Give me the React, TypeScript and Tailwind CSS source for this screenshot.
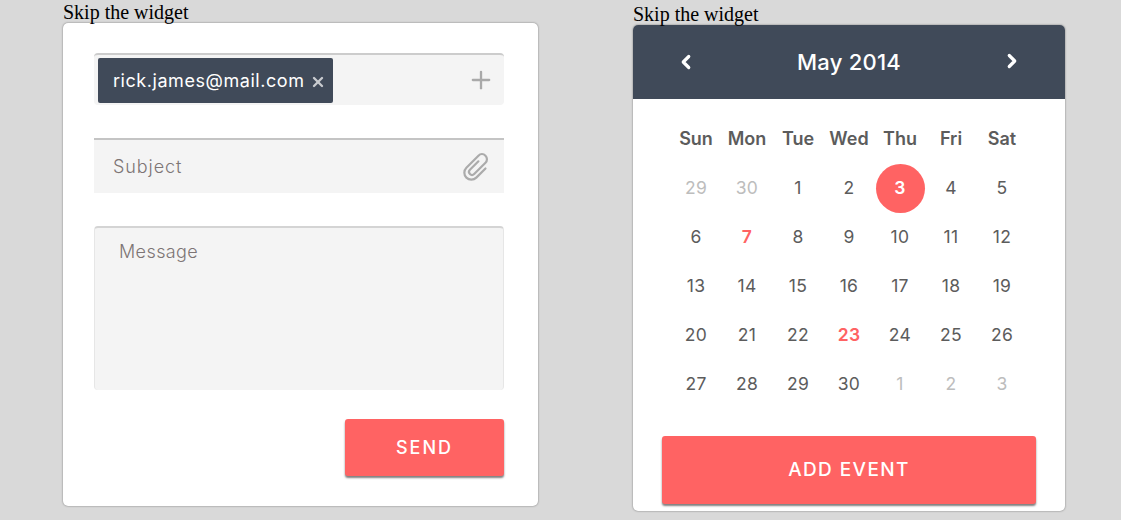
import React from 'react';
import { ChevronLeft, ChevronRight, Plus, X } from 'lucide-react';

type Day = { label: number; kind?: 'muted' | 'red' | 'today' };

const weekDays = ['Sun', 'Mon', 'Tue', 'Wed', 'Thu', 'Fri', 'Sat'];

const days: Day[] = [
    { label: 29, kind: 'muted' }, { label: 30, kind: 'muted' }, { label: 1 }, { label: 2 }, { label: 3, kind: 'today' }, { label: 4 }, { label: 5 },
    { label: 6 }, { label: 7, kind: 'red' }, { label: 8 }, { label: 9 }, { label: 10 }, { label: 11 }, { label: 12 },
    { label: 13 }, { label: 14 }, { label: 15 }, { label: 16 }, { label: 17 }, { label: 18 }, { label: 19 },
    { label: 20 }, { label: 21 }, { label: 22 }, { label: 23, kind: 'red' }, { label: 24 }, { label: 25 }, { label: 26 },
    { label: 27 }, { label: 28 }, { label: 29 }, { label: 30 }, { label: 1, kind: 'muted' }, { label: 2, kind: 'muted' }, { label: 3, kind: 'muted' },
];

const dayClass = (kind?: Day['kind']) => {
    if (kind === 'muted') return 'text-[#bdbdbd]';
    if (kind === 'red') return 'text-[#ff6363] font-semibold';
    if (kind === 'today') return 'bg-[#ff6363] text-white font-semibold rounded-full';
    return 'text-[#5c5c5c]';
};

const SkipLink = () => (
    <div className="font-['Liberation_Serif',serif] text-[20px] leading-[21px] text-black">Skip the widget</div>
);

// diagonal clip with a loop at each end
const ClipIcon = () => (
    <svg viewBox="0 0 28 28" className="w-[28px] h-[28px] text-[#ababab]" fill="none" stroke="currentColor" strokeWidth="2.2" strokeLinecap="round">
        <g transform="rotate(45 14 14)">
            <path d="M11 9 V21 a3 3 0 0 0 6 0 V5 a5 5 0 0 0 -10 0 V22 a7 7 0 0 0 14 0 V9" />
        </g>
    </svg>
);

const App: React.FC = () => {
    return (
        <div className="h-[520px] overflow-hidden bg-[#d9d9d9] pl-[63px] flex items-start font-['Inter',sans-serif]">
            {/* Mail widget */}
            <div className="w-[475px] pt-[2px]">
                <SkipLink />
                <div className="h-[483px] bg-white rounded-[5px] shadow-[0_0_2px_rgba(0,0,0,0.5)] pt-[30px] pl-[31px] pr-[34px]">
                    <div className="h-[52px] bg-[#f4f4f4] rounded-[4px] border-t-2 border-[#cccccc] pl-[4px] pr-[9px] flex items-center justify-between">
                        <div className="h-[45px] w-[235px] mt-[1px] bg-[#404a59] rounded-[2px] flex items-center pl-[15px] text-white text-[18px] tracking-[0.55px]">
                            <span>rick.james@mail.com</span>
                            <X className="w-[16px] h-[16px] ml-[6px] mt-[2px] text-[#c9ccd0]" strokeWidth={3.5} />
                        </div>
                        <Plus className="w-[28px] h-[28px] text-[#a9a9a9]" strokeWidth={2} />
                    </div>

                    <div className="mt-[33px] h-[55px] bg-[#f4f4f4] border-t-2 border-[#c4c4c4] pl-[19px] pr-[13px] flex items-center justify-between text-[#7d7575] text-[18px] tracking-[0.9px] font-light">
                        <span>Subject</span>
                        <ClipIcon />
                    </div>

                    <div className="mt-[33px] h-[164px] bg-[#f4f4f4] rounded-[4px] border-t-2 border-x border-[#d4d4d4] border-x-[#e6e6e6] pl-[24px] pt-[13px] text-[#7d7575] text-[18px] tracking-[0.4px] font-light leading-[22px]">
                        Message
                    </div>

                    <div className="mt-[29px] flex justify-end">
                        <button className="w-[159px] h-[57px] bg-[#ff6363] rounded-[3px] text-white text-[18px] tracking-[2px] font-medium shadow-[0_2px_2px_rgba(0,0,0,0.5)]">SEND</button>
                    </div>
                </div>
            </div>

            {/* Calendar widget */}
            <div className="w-[432px] ml-[95px] pt-[4px]">
                <SkipLink />
                <div className="h-[486px] bg-white rounded-[5px] overflow-hidden shadow-[0_0_2px_rgba(0,0,0,0.5)]">
                    <div className="h-[74px] bg-[#404a59] flex items-center justify-between pl-[42px] pr-[42px] text-white">
                        <ChevronLeft className="w-[22px] h-[22px]" strokeWidth={3.5} />
                        <span className="text-[22px] tracking-[0.25px] font-medium">May 2014</span>
                        <ChevronRight className="w-[22px] h-[22px] -mt-[3px]" strokeWidth={3.5} />
                    </div>

                    <div className="pl-[37.5px] pt-[15px]">
                        <div className="grid grid-cols-[repeat(7,51px)]">
                            {weekDays.map(name => (
                                <div key={name} className="h-[49px] flex items-center justify-center text-[18px] font-semibold text-[#5c5c5c]">{name}</div>
                            ))}
                            {days.map((day, i) => (
                                <div key={i} className="h-[49px] flex items-center justify-center text-[17.5px] tracking-[0.3px] pt-[1px]">
                                    <span className={`w-[49px] h-[49px] flex items-center justify-center ${dayClass(day.kind)}`}>{day.label}</span>
                                </div>
                            ))}
                        </div>
                    </div>

                    <div className="px-[29px] mt-[28px]">
                        <button className="w-full h-[68px] pt-[1px] bg-[#ff6363] rounded-[3px] text-white text-[19px] tracking-[1.4px] font-medium shadow-[0_2px_2px_rgba(0,0,0,0.5)]">ADD EVENT</button>
                    </div>
                </div>
            </div>
        </div>
    );
};

export default App;
